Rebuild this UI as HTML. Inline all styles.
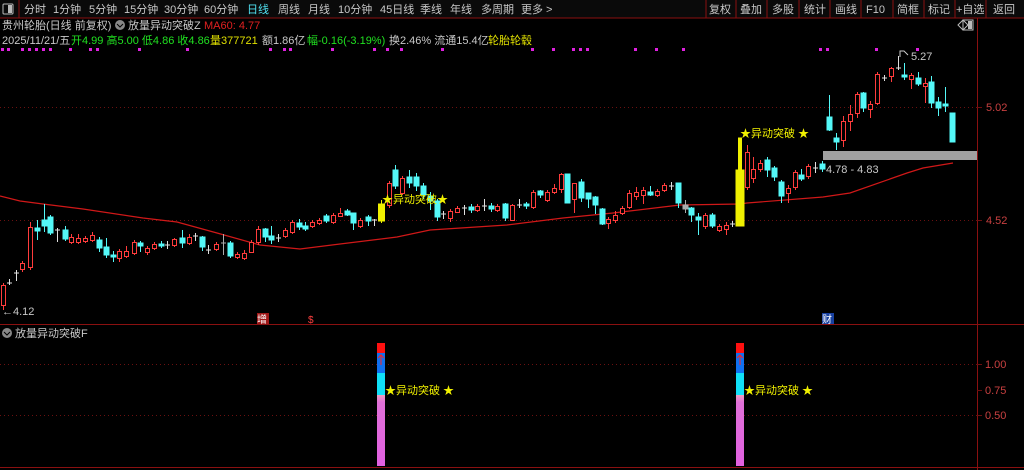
<!DOCTYPE html>
<html><head><meta charset="utf-8"><style>
*{margin:0;padding:0}
body{width:1024px;height:470px;background:#000;overflow:hidden;font-family:"Liberation Sans","Noto Sans CJK SC",sans-serif}
svg{display:block}
.r{stroke:#ff3c3c;fill:#000;stroke-width:1}
.c{stroke:#54f8f8;fill:#54f8f8;stroke-width:1}
.w{stroke:#e0e0e0;fill:#e0e0e0;stroke-width:1}
.g{stroke:#aaa;fill:#aaa}
.y{stroke:#f0f000;fill:#f0f000}
text{font-family:"Liberation Sans","Noto Sans CJK SC",sans-serif}
</style></head><body>
<svg width="1024" height="470" viewBox="0 0 1024 470" xmlns="http://www.w3.org/2000/svg">
<rect x="0" y="0" width="1024" height="18" fill="#0a0a0a"/>
<line x1="0" y1="18" x2="1024" y2="18" stroke="#8a1010"/>
<rect x="3" y="4" width="10" height="10" fill="none" stroke="#bbb" rx="1"/><rect x="8" y="5" width="4" height="8" fill="#bbb"/>
<line x1="19" y1="0" x2="19" y2="18" stroke="#8a1010"/>
<g font-size="11" fill="#c8c8c8">
<text x="24" y="13">分时</text><text x="53" y="13">1分钟</text><text x="89" y="13">5分钟</text><text x="124" y="13">15分钟</text><text x="164" y="13">30分钟</text><text x="204" y="13">60分钟</text><text x="247" y="13" fill="#50e0f0">日线</text><text x="278" y="13">周线</text><text x="308" y="13">月线</text><text x="338" y="13">10分钟</text><text x="380" y="13">45日线</text><text x="420" y="13">季线</text><text x="450" y="13">年线</text><text x="481" y="13">多周期</text><text x="521" y="13">更多 &gt;</text>
<text x="709" y="13">复权</text><text x="740" y="13">叠加</text><text x="772" y="13">多股</text><text x="804" y="13">统计</text><text x="835" y="13">画线</text><text x="866" y="13">F10</text><text x="897" y="13">简框</text><text x="928" y="13">标记</text><text x="956" y="13">+自选</text><text x="993" y="13">返回</text>
</g>
<g stroke="#8a1010"><line x1="706" y1="0" x2="706" y2="18"/><line x1="736" y1="0" x2="736" y2="18"/><line x1="767" y1="0" x2="767" y2="18"/><line x1="799" y1="0" x2="799" y2="18"/><line x1="830" y1="0" x2="830" y2="18"/><line x1="861" y1="0" x2="861" y2="18"/><line x1="893" y1="0" x2="893" y2="18"/><line x1="924" y1="0" x2="924" y2="18"/><line x1="955" y1="0" x2="955" y2="18"/><line x1="986" y1="0" x2="986" y2="18"/></g>
<line x1="977.5" y1="18" x2="977.5" y2="470" stroke="#8a1010"/>
<line x1="0" y1="324.5" x2="1024" y2="324.5" stroke="#8a1010"/>
<g font-size="11">
<text x="2" y="29" fill="#c8c8c8">贵州轮胎(日线 前复权)</text>
<circle cx="120" cy="25" r="5" fill="#888"/><path d="M117 24l3 3 3-3" stroke="#000" fill="none"/>
<text x="128" y="29" fill="#c8c8c8">放量异动突破Z</text>
<text x="204" y="29" fill="#e02020">MA60: 4.77</text>
<text x="2" y="44" fill="#c8c8c8">2025/11/21/五</text>
<text x="71" y="44" fill="#20e020">开4.99 高5.00 低4.86 收4.86</text>
<text x="210" y="44" fill="#e0e000">量377721</text>
<text x="262" y="44" fill="#c8c8c8">额1.86亿</text>
<text x="307" y="44" fill="#20e020">幅-0.16(-3.19%)</text>
<text x="389" y="44" fill="#c8c8c8">换2.46% 流通15.4亿</text>
<text x="488" y="44" fill="#e0e000">轮胎轮毂</text>
</g>
<path d="M958 25l5-5 5 5-5 5z" fill="none" stroke="#bbb"/>
<rect x="963" y="20" width="10" height="10" fill="none" stroke="#bbb"/><rect x="968" y="21" width="4" height="8" fill="#bbb"/>
<g fill="#e020e0">
<rect x="1" y="48" width="3" height="3"/><rect x="7" y="48" width="3" height="3"/><rect x="21" y="48" width="3" height="3"/><rect x="28" y="48" width="3" height="3"/><rect x="35" y="48" width="3" height="3"/><rect x="42" y="48" width="3" height="3"/><rect x="49" y="48" width="3" height="3"/><rect x="69" y="48" width="3" height="3"/><rect x="89" y="48" width="3" height="3"/><rect x="96" y="48" width="3" height="3"/><rect x="138" y="48" width="3" height="3"/><rect x="186" y="48" width="3" height="3"/><rect x="269" y="48" width="3" height="3"/><rect x="283" y="48" width="3" height="3"/><rect x="289" y="48" width="3" height="3"/><rect x="331" y="48" width="3" height="3"/><rect x="373" y="48" width="3" height="3"/><rect x="386" y="48" width="3" height="3"/><rect x="400" y="48" width="3" height="3"/><rect x="441" y="48" width="3" height="3"/><rect x="531" y="48" width="3" height="3"/><rect x="552" y="48" width="3" height="3"/><rect x="572" y="48" width="3" height="3"/><rect x="579" y="48" width="3" height="3"/><rect x="586" y="48" width="3" height="3"/><rect x="634" y="48" width="3" height="3"/><rect x="655" y="48" width="3" height="3"/><rect x="682" y="48" width="3" height="3"/><rect x="819" y="48" width="3" height="3"/><rect x="826" y="48" width="3" height="3"/><rect x="875" y="48" width="3" height="3"/><rect x="916" y="48" width="3" height="3"/>
</g>
<g stroke="#6a1010" stroke-dasharray="1,3"><line x1="0" y1="107.5" x2="977" y2="107.5"/><line x1="0" y1="220.5" x2="977" y2="220.5"/>
<line x1="0" y1="364.5" x2="977" y2="364.5"/><line x1="0" y1="415.5" x2="977" y2="415.5"/></g>
<g font-size="11" fill="#c84040"><text x="986" y="111">5.02</text><text x="986" y="224">4.52</text><text x="985" y="368">1.00</text><text x="985" y="394">0.75</text><text x="985" y="419">0.50</text></g>
<g stroke="#6a1010"><line x1="977" y1="107.5" x2="982" y2="107.5"/><line x1="977" y1="220.5" x2="982" y2="220.5"/><line x1="977" y1="364.5" x2="982" y2="364.5"/><line x1="977" y1="390.5" x2="982" y2="390.5"/><line x1="977" y1="415.5" x2="982" y2="415.5"/></g>
<polyline fill="none" stroke="#d01818" stroke-width="1.2" points="0,196 20,201 43,204 83,209 143,218 177,222 217,233 260,245 300,249 340,244 397,237 430,230 507,225 563,218 613,213 663,207 680,205 740,204 747,203 823,197 850,193 907,173 923,168 953,163"/>
<rect x="823" y="151" width="154" height="9" fill="#a0a0a0"/>
<text x="826" y="173" font-size="11" fill="#c8c8c8">4.78 - 4.83</text>
<path d="M900 57v-6h4l4 4" fill="none" stroke="#ccc"/><text x="911" y="60" font-size="11" fill="#c8c8c8">5.27</text>
<text x="2" y="315" font-size="11" fill="#c8c8c8">←4.12</text>
<rect x="257" y="313" width="12" height="11" fill="#a01818"/><text x="257" y="323" font-size="10" fill="#fff">增</text>
<text x="308" y="323" font-size="10" fill="#ff4040">$</text>
<rect x="822" y="313" width="12" height="11" fill="#1840a0"/><text x="822" y="323" font-size="10" fill="#fff">财</text>
<g>
<path class="r" d="M3.5 283V310"/><rect class="r" x="1.5" y="285.5" width="4" height="20"/>
<path class="w" d="M9.5 279V285M7 283H12"/>
<path class="w" d="M16.5 270V281M14 273H19"/>
<path class="r" d="M22.5 261V272"/><rect class="r" x="20.5" y="263.5" width="4" height="6"/>
<path class="r" d="M30.5 222V270"/><rect class="r" x="28.5" y="227.5" width="4" height="40"/>
<path class="c" d="M37.5 220V240"/><rect class="c" x="35" y="228" width="5" height="3"/>
<path class="c" d="M44.5 204V232"/><rect class="c" x="42" y="220" width="5" height="6"/>
<path class="c" d="M50.5 215V235"/><rect class="c" x="48" y="217" width="5" height="16"/>
<path class="w" d="M57.5 228V242M55 230H60"/>
<path class="c" d="M65.5 226V241"/><rect class="c" x="63" y="230" width="5" height="9"/>
<path class="r" d="M71.5 234V244"/><rect class="r" x="69.5" y="237.5" width="4" height="5"/>
<path class="r" d="M78.5 234V244"/><rect class="r" x="76.5" y="238.5" width="4" height="4"/>
<path class="r" d="M85.5 236V243"/><rect class="r" x="83.5" y="238.5" width="4" height="3"/>
<path class="r" d="M92.5 232V242"/><rect class="r" x="90.5" y="235.5" width="4" height="5"/>
<path class="c" d="M99.5 237V252"/><rect class="c" x="97" y="240" width="5" height="8"/>
<path class="c" d="M106.5 238V258"/><rect class="c" x="104" y="247" width="5" height="8"/>
<path class="c" d="M113.5 251V262"/><rect class="c" x="111" y="255" width="5" height="2"/>
<path class="r" d="M119.5 249V262"/><rect class="r" x="117.5" y="251.5" width="4" height="7"/>
<path class="r" d="M126.5 246V258"/><rect class="r" x="124.5" y="251.5" width="4" height="5"/>
<path class="r" d="M134.5 240V255"/><rect class="r" x="132.5" y="242.5" width="4" height="11"/>
<path class="c" d="M140.5 241V252"/><rect class="c" x="138" y="243" width="5" height="3"/>
<path class="r" d="M147.5 246V255"/><rect class="r" x="145.5" y="248.5" width="4" height="4"/>
<path class="r" d="M154.5 242V250"/><rect class="r" x="152.5" y="244.5" width="4" height="4"/>
<path class="c" d="M161.5 241V248"/><rect class="c" x="159" y="244" width="5" height="2"/>
<path class="w" d="M167.5 241V249M165 245H170"/>
<path class="r" d="M174.5 238V247"/><rect class="r" x="172.5" y="239.5" width="4" height="6"/>
<path class="c" d="M182.5 230V248"/><rect class="c" x="180" y="238" width="5" height="5"/>
<path class="r" d="M189.5 234V245"/><rect class="r" x="187.5" y="237.5" width="4" height="6"/>
<path class="w" d="M195.5 233V241M193 236H198"/>
<path class="c" d="M202.5 236V251"/><rect class="c" x="200" y="237" width="5" height="10"/>
<path class="w" d="M208.5 245V254M206 250H211"/>
<path class="r" d="M216.5 242V251"/><rect class="r" x="214.5" y="244.5" width="4" height="5"/>
<path class="g" d="M223.5 234V255M221 243H226"/>
<path class="c" d="M230.5 241V258"/><rect class="c" x="228" y="243" width="5" height="13"/>
<path class="r" d="M237.5 252V259"/><rect class="r" x="235.5" y="254.5" width="4" height="3"/>
<path class="r" d="M244.5 250V260"/><rect class="r" x="242.5" y="253.5" width="4" height="5"/>
<path class="r" d="M251.5 240V253"/><rect class="r" x="249.5" y="242.5" width="4" height="10"/>
<path class="r" d="M258.5 226V245"/><rect class="r" x="256.5" y="229.5" width="4" height="13"/>
<path class="c" d="M265.5 228V242"/><rect class="c" x="263" y="229" width="5" height="8"/>
<path class="c" d="M271.5 226V244"/><rect class="c" x="269" y="236" width="5" height="4"/>
<path class="w" d="M278.5 234V242M276 238H281"/>
<path class="r" d="M285.5 228V238"/><rect class="r" x="283.5" y="230.5" width="4" height="6"/>
<path class="r" d="M292.5 220V234"/><rect class="r" x="290.5" y="222.5" width="4" height="10"/>
<path class="c" d="M299.5 219V230"/><rect class="c" x="297" y="223" width="5" height="4"/>
<path class="c" d="M305.5 222V231"/><rect class="c" x="303" y="226" width="5" height="3"/>
<path class="r" d="M312.5 220V228"/><rect class="r" x="310.5" y="222.5" width="4" height="4"/>
<path class="r" d="M319.5 218V225"/><rect class="r" x="317.5" y="220.5" width="4" height="3"/>
<path class="c" d="M326.5 214V223"/><rect class="c" x="324" y="216" width="5" height="5"/>
<path class="r" d="M333.5 213V224"/><rect class="r" x="331.5" y="215.5" width="4" height="7"/>
<path class="r" d="M340.5 208V217"/><rect class="r" x="338.5" y="213.5" width="4" height="3"/>
<path class="c" d="M347.5 209V216"/><rect class="c" x="345" y="211" width="5" height="4"/>
<path class="c" d="M353.5 213V230"/><rect class="c" x="351" y="213" width="5" height="10"/>
<path class="r" d="M360.5 218V228"/><rect class="r" x="358.5" y="220.5" width="4" height="6"/>
<path class="c" d="M368.5 215V226"/><rect class="c" x="366" y="217" width="5" height="4"/>
<path class="w" d="M374.5 219V226M372 220H377"/>
<path class="y" d="M381.5 200V223"/><rect class="y" x="378.5" y="204" width="6" height="17"/>
<path class="r" d="M389.5 181V208"/><rect class="r" x="387.5" y="183.5" width="4" height="22"/>
<path class="c" d="M395.5 165V189"/><rect class="c" x="393" y="170" width="5" height="16"/>
<path class="r" d="M402.5 176V195"/><rect class="r" x="400.5" y="178.5" width="4" height="15"/>
<path class="c" d="M409.5 170V188"/><rect class="c" x="407" y="177" width="5" height="6"/>
<path class="c" d="M416.5 173V191"/><rect class="c" x="414" y="177" width="5" height="9"/>
<path class="c" d="M423.5 183V199"/><rect class="c" x="421" y="186" width="5" height="9"/>
<path class="c" d="M430.5 192V210"/><rect class="c" x="428" y="196" width="5" height="5"/>
<path class="c" d="M437.5 199V221"/><rect class="c" x="435" y="201" width="5" height="16"/>
<path class="w" d="M443.5 211V219M441 214H446"/>
<path class="r" d="M450.5 209V222"/><rect class="r" x="448.5" y="211.5" width="4" height="7"/>
<path class="r" d="M457.5 206V213"/><rect class="r" x="455.5" y="208.5" width="4" height="4"/>
<path class="w" d="M464.5 205V215M462 208H467"/>
<path class="c" d="M471.5 204V213"/><rect class="c" x="469" y="207" width="5" height="3"/>
<path class="r" d="M477.5 204V212"/><rect class="r" x="475.5" y="206.5" width="4" height="4"/>
<path class="w" d="M484.5 199V211M482 206H487"/>
<path class="c" d="M491.5 203V212"/><rect class="c" x="489" y="206" width="5" height="3"/>
<path class="r" d="M497.5 204V212"/><rect class="r" x="495.5" y="206.5" width="4" height="4"/>
<path class="c" d="M505.5 203V221"/><rect class="c" x="503" y="204" width="5" height="14"/>
<path class="r" d="M512.5 204V221"/><rect class="r" x="510.5" y="205.5" width="4" height="15"/>
<path class="w" d="M519.5 199V208M517 205H522"/>
<path class="c" d="M526.5 202V209"/><rect class="c" x="524" y="204" width="5" height="2"/>
<path class="r" d="M533.5 190V209"/><rect class="r" x="531.5" y="192.5" width="4" height="15"/>
<path class="c" d="M540.5 190V198"/><rect class="c" x="538" y="191" width="5" height="4"/>
<path class="r" d="M547.5 190V202"/><rect class="r" x="545.5" y="192.5" width="4" height="8"/>
<path class="r" d="M554.5 184V194"/><rect class="r" x="552.5" y="188.5" width="4" height="4"/>
<path class="r" d="M561.5 173V193"/><rect class="r" x="559.5" y="174.5" width="4" height="15"/>
<path class="c" d="M567.5 174V203"/><rect class="c" x="565" y="174" width="5" height="29"/>
<path class="r" d="M574.5 183V213"/><rect class="r" x="572.5" y="183.5" width="4" height="16"/>
<path class="c" d="M581.5 179V202"/><rect class="c" x="579" y="182" width="5" height="16"/>
<path class="c" d="M588.5 193V208"/><rect class="c" x="586" y="193" width="5" height="6"/>
<path class="c" d="M595.5 196V214"/><rect class="c" x="593" y="197" width="5" height="8"/>
<path class="c" d="M602.5 208V225"/><rect class="c" x="600" y="209" width="5" height="15"/>
<path class="r" d="M608.5 217V229"/><rect class="r" x="606.5" y="219.5" width="4" height="4"/>
<path class="r" d="M615.5 211V223"/><rect class="r" x="613.5" y="215.5" width="4" height="5"/>
<path class="r" d="M622.5 206V215"/><rect class="r" x="620.5" y="208.5" width="4" height="5"/>
<path class="r" d="M629.5 190V209"/><rect class="r" x="627.5" y="193.5" width="4" height="14"/>
<path class="r" d="M636.5 187V200"/><rect class="r" x="634.5" y="192.5" width="4" height="4"/>
<path class="r" d="M643.5 187V204"/><rect class="r" x="641.5" y="190.5" width="4" height="5"/>
<path class="c" d="M650.5 186V196"/><rect class="c" x="648" y="192" width="5" height="3"/>
<path class="r" d="M657.5 189V197"/><rect class="r" x="655.5" y="191.5" width="4" height="4"/>
<path class="r" d="M664.5 183V192"/><rect class="r" x="662.5" y="185.5" width="4" height="5"/>
<path class="w" d="M671.5 182V190M669 186H674"/>
<path class="c" d="M678.5 183V208"/><rect class="c" x="676" y="183" width="5" height="20"/>
<path class="g" d="M685.5 200V213"/><rect class="g" x="683" y="205" width="5" height="4"/>
<path class="c" d="M691.5 207V222"/><rect class="c" x="689" y="208" width="5" height="7"/>
<path class="c" d="M698.5 213V235"/><rect class="c" x="696" y="217" width="5" height="3"/>
<path class="r" d="M705.5 213V229"/><rect class="r" x="703.5" y="215.5" width="4" height="11"/>
<path class="c" d="M712.5 213V228"/><rect class="c" x="710" y="215" width="5" height="11"/>
<path class="r" d="M719.5 224V232"/><rect class="r" x="717.5" y="226.5" width="4" height="4"/>
<path class="r" d="M726.5 222V235"/><rect class="r" x="724.5" y="225.5" width="4" height="4"/>
<path class="w" d="M732.5 221V227M730 224H735"/>
<rect class="y" x="738.5" y="138" width="3" height="88"/><rect class="y" x="736" y="170" width="8" height="56"/>
<path class="r" d="M747.5 145V190"/><rect class="r" x="745.5" y="152.5" width="4" height="35"/>
<path class="r" d="M753.5 157V183"/><rect class="r" x="751.5" y="169.5" width="4" height="9"/>
<path class="r" d="M760.5 160V172"/><rect class="r" x="758.5" y="163.5" width="4" height="6"/>
<path class="c" d="M767.5 157V177"/><rect class="c" x="765" y="160" width="5" height="10"/>
<path class="c" d="M774.5 166V181"/><rect class="c" x="772" y="168" width="5" height="9"/>
<path class="c" d="M781.5 180V203"/><rect class="c" x="779" y="182" width="5" height="14"/>
<path class="r" d="M788.5 185V203"/><rect class="r" x="786.5" y="188.5" width="4" height="5"/>
<path class="r" d="M795.5 170V190"/><rect class="r" x="793.5" y="172.5" width="4" height="15"/>
<path class="c" d="M801.5 169V181"/><rect class="c" x="799" y="175" width="5" height="4"/>
<path class="r" d="M808.5 164V179"/><rect class="r" x="806.5" y="166.5" width="4" height="10"/>
<path class="w" d="M815.5 162V173M813 168H818"/>
<path class="c" d="M822.5 161V172"/><rect class="c" x="820" y="164" width="5" height="5"/>
<path class="c" d="M829.5 95V131"/><rect class="c" x="827" y="117" width="5" height="13"/>
<path class="c" d="M836.5 133V150"/><rect class="c" x="834" y="138" width="5" height="4"/>
<path class="r" d="M843.5 116V147"/><rect class="r" x="841.5" y="121.5" width="4" height="19"/>
<path class="r" d="M850.5 105V131"/><rect class="r" x="848.5" y="114.5" width="4" height="7"/>
<path class="r" d="M857.5 92V118"/><rect class="r" x="855.5" y="94.5" width="4" height="19"/>
<path class="c" d="M863.5 92V112"/><rect class="c" x="861" y="93" width="5" height="15"/>
<path class="r" d="M870.5 101V118"/><rect class="r" x="868.5" y="104.5" width="4" height="5"/>
<path class="r" d="M877.5 72V105"/><rect class="r" x="875.5" y="74.5" width="4" height="29"/>
<path class="w" d="M884.5 75V81M882 78H887"/>
<path class="r" d="M891.5 67V82"/><rect class="r" x="889.5" y="68.5" width="4" height="8"/>
<path class="w" d="M898.5 56V70M896 68H901"/>
<path class="c" d="M904.5 63V80"/><rect class="c" x="902" y="75" width="5" height="2"/>
<path class="r" d="M911.5 73V89"/><rect class="r" x="909.5" y="75.5" width="4" height="4"/>
<path class="c" d="M918.5 72V86"/><rect class="c" x="916" y="78" width="5" height="6"/>
<path class="r" d="M925.5 78V103"/><rect class="r" x="923.5" y="83.5" width="4" height="3"/>
<path class="c" d="M931.5 76V108"/><rect class="c" x="929" y="82" width="5" height="21"/>
<path class="c" d="M938.5 97V116"/><rect class="c" x="936" y="102" width="5" height="6"/>
<path class="c" d="M945.5 87V112"/><rect class="c" x="943" y="104" width="5" height="2"/>
<path class="c" d="M952.5 113V142"/><rect class="c" x="950" y="113" width="5" height="29"/>
</g>
<g font-size="11" fill="#f0f000"><text x="382" y="203">★异动突破★</text><text x="740" y="137">★异动突破 ★</text></g>
<circle cx="7" cy="333" r="5" fill="#888"/><path d="M4 332l3 3 3-3" stroke="#000" fill="none"/>
<text x="15" y="337" font-size="11" fill="#c8c8c8">放量异动突破F</text>
<defs><linearGradient id="pk" x1="0" y1="0" x2="0" y2="1"><stop offset="0" stop-color="#f0a0c0"/><stop offset="0.1" stop-color="#e070d8"/><stop offset="1" stop-color="#e060e0"/></linearGradient></defs>
<g>
<rect x="377" y="343" width="8" height="10" fill="#ff1010"/><rect x="377" y="353" width="8" height="20" fill="#1070f0"/><rect x="377" y="373" width="8" height="22" fill="#10e0f8"/><rect x="377" y="395" width="8" height="71" fill="url(#pk)"/>
<path d="M381 355v10M378 358l3-3 3 3" stroke="#ff2020" fill="none"/>
<rect x="736" y="343" width="8" height="10" fill="#ff1010"/><rect x="736" y="353" width="8" height="20" fill="#1070f0"/><rect x="736" y="373" width="8" height="22" fill="#10e0f8"/><rect x="736" y="395" width="8" height="71" fill="url(#pk)"/>
<path d="M740 355v10M737 358l3-3 3 3" stroke="#ff2020" fill="none"/>
</g>
<g font-size="11" fill="#f0f000"><text x="385" y="394">★异动突破 ★</text><text x="744" y="394">★异动突破 ★</text></g>
<line x1="0" y1="467.5" x2="1024" y2="467.5" stroke="#8a1010"/>
</svg>
</body></html>
